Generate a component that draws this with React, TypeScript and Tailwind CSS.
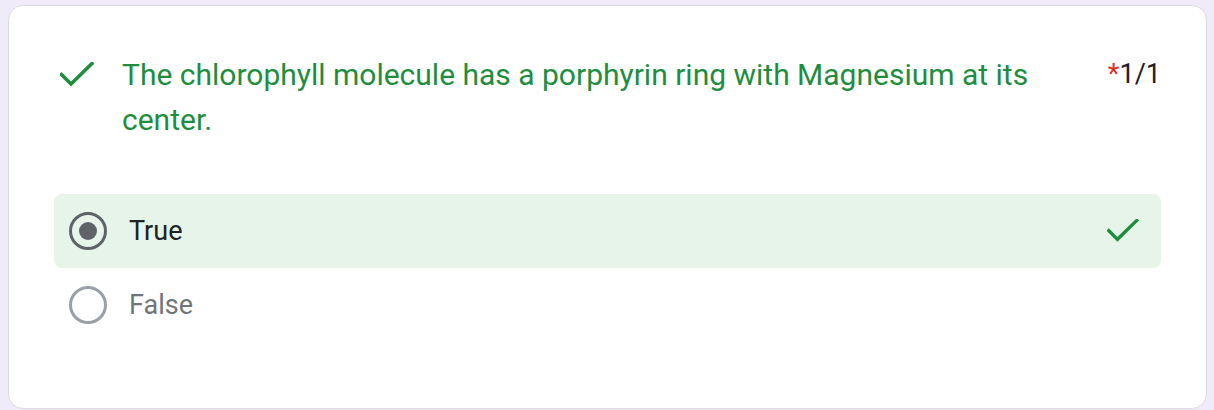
import React from 'react';

const Check: React.FC<{ className?: string }> = ({ className }) => (
  <svg className={className} viewBox="0 0 34 26" fill="none">
    <polyline points="1.5,12.5 11,22 32,1.5" stroke="#1e8e3e" strokeWidth="3.6" strokeLinecap="square" />
  </svg>
);

const Radio: React.FC<{ checked?: boolean }> = ({ checked }) => (
  <div
    className={
      checked
        ? 'w-[38px] h-[38px] rounded-full border-[3.5px] border-[#5f6368] flex items-center justify-center shrink-0'
        : 'w-[38px] h-[38px] rounded-full border-[3px] border-[#9aa0a6] flex items-center justify-center shrink-0'
    }
  >
    {checked && <div className="w-[18px] h-[18px] rounded-full bg-[#5f6368]"></div>}
  </div>
);

export default function App() {
  return (
    <div className="bg-[#f0ebf8] h-[410px] pt-[5px] pl-[8px] pr-[7px] font-['Roboto',sans-serif]">
      <div className="bg-white border border-[#dadce0] rounded-[15px] h-[404px] px-[45px] pt-[46px]">
        {/* Question header */}
        <div className="flex items-start pl-[6px]">
          <div className="h-[45px] flex items-center shrink-0">
            <Check className="w-[34px] h-[26px]" />
          </div>
          <div className="flex-1 ml-[28px] pr-[60px] text-[30px] leading-[45px] text-[#1e8e3e]">
            The chlorophyll molecule has a porphyrin ring with Magnesium at its center.
          </div>
          <div className="text-[27px] leading-[45px] text-[#202124] whitespace-nowrap">
            <span className="text-[#d93025]">*</span>1/1
          </div>
        </div>

        {/* Options */}
        <div className="mt-[52px]">
          <div className="flex items-center h-[74px] rounded-[8px] bg-[#e6f4ea] pl-[15px] pr-[22px]">
            <Radio checked />
            <span className="ml-[22px] flex-1 text-[27px] text-[#202124]">True</span>
            <Check className="w-[32px] h-[24px]" />
          </div>
          <div className="flex items-center h-[74px] pl-[15px] pr-[22px]">
            <Radio />
            <span className="ml-[22px] flex-1 text-[27px] text-[#70757a]">False</span>
          </div>
        </div>
      </div>
    </div>
  );
}
